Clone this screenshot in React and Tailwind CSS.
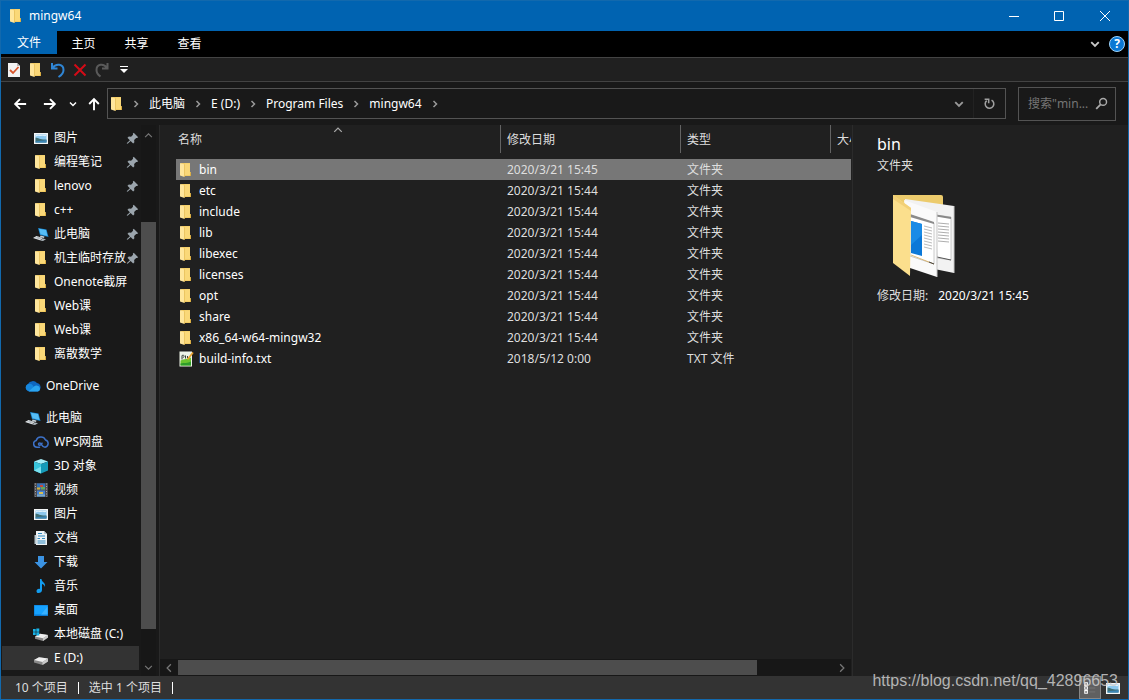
import { useState } from 'react';

const FONT = "font-['Noto_Sans','Noto_Sans_CJK_SC',sans-serif]";

const quickAccess = [
  { name: '图片', icon: PictureIcon, pinned: true },
  { name: '编程笔记', icon: FolderIcon, pinned: true },
  { name: 'lenovo', icon: FolderIcon, pinned: true },
  { name: 'c++', icon: FolderIcon, pinned: true },
  { name: '此电脑', icon: ComputerIcon, pinned: true },
  { name: '机主临时存放', icon: FolderIcon, pinned: true },
  { name: 'Onenote截屏', icon: FolderIcon },
  { name: 'Web课', icon: FolderIcon },
  { name: 'Web课', icon: FolderIcon },
  { name: '离散数学', icon: FolderIcon },
];

const computer = [
  { name: 'WPS网盘', icon: WpsIcon },
  { name: '3D 对象', icon: CubeIcon },
  { name: '视频', icon: VideoIcon },
  { name: '图片', icon: PictureIcon },
  { name: '文档', icon: DocumentIcon },
  { name: '下载', icon: DownloadIcon },
  { name: '音乐', icon: MusicIcon },
  { name: '桌面', icon: DesktopIcon },
  { name: '本地磁盘 (C:)', icon: SystemDriveIcon },
  { name: 'E (D:)', icon: DriveIcon, active: true },
];

const files = [
  { name: 'bin', date: '2020/3/21 15:45', type: '文件夹' },
  { name: 'etc', date: '2020/3/21 15:44', type: '文件夹' },
  { name: 'include', date: '2020/3/21 15:44', type: '文件夹' },
  { name: 'lib', date: '2020/3/21 15:44', type: '文件夹' },
  { name: 'libexec', date: '2020/3/21 15:44', type: '文件夹' },
  { name: 'licenses', date: '2020/3/21 15:44', type: '文件夹' },
  { name: 'opt', date: '2020/3/21 15:44', type: '文件夹' },
  { name: 'share', date: '2020/3/21 15:44', type: '文件夹' },
  { name: 'x86_64-w64-mingw32', date: '2020/3/21 15:44', type: '文件夹' },
  { name: 'build-info.txt', date: '2018/5/12 0:00', type: 'TXT 文件' },
];

function Svg({ children, size = 16, className = '' }) {
  return (
    <svg width={size} height={size} viewBox="0 0 16 16" fill="none" aria-hidden="true" className={`shrink-0 ${className}`}>
      {children}
    </svg>
  );
}

function FolderIcon() {
  return (
    <Svg>
      <path d="M3 1h9v9l1 .5V14H6z" fill="#f3cc64" />
      <path d="M7 1.500h5v9l.5 2.500H7z" fill="#fad878" />
      <path d="M2 1 6.500 2.500V15L2 13.500z" fill="#ffe69c" />
      <path d="M6.500 2.500V15" stroke="#e0b74d" strokeWidth=".6" />
      <path d="M12 10.500h1V14h-1z" fill="#dcae42" />
    </Svg>
  );
}

function PictureIcon() {
  return (
    <Svg>
      <path d="M1 3h14v11H1z" fill="#f4f6f7" />
      <path d="M2.500 4.500h11v8h-11z" fill="#8cc8ee" />
      <path d="M3 6.500c2-1.500 4 0 5.500-.5s3 .5 4.500 0v-1H3z" fill="#dff1fb" />
      <path d="M2.500 7.500c3 .3 5 2.500 11 2v3h-11z" fill="#3f6f75" />
      <path d="M2.500 11.500c4-.8 7-.6 11-1.500v2.500h-11z" fill="#3b86b8" />
    </Svg>
  );
}

function ComputerIcon() {
  return (
    <Svg>
      <path d="m5 2 8.500 1.500 2 7.500L7 9z" fill="#1684cf" />
      <path d="m6 2.800 7 1.300 1.500 5.900L7.500 8.300z" fill="#56bdf5" />
      <path d="m7.500 9.500 4 1-.5 1.500-4-1z" fill="#c5d0d6" />
      <path d="m0 12 3.500-2 6.500 2-3 2.300z" fill="#e7eaec" />
      <path d="m7 14.500 3-2 3 .8-3 1.700z" fill="#a9b2b8" />
      <path d="m2.500 11.500 5 1.600M4 10.900l4.500 1.500" stroke="#8c969c" strokeWidth=".6" />
    </Svg>
  );
}

function CloudIcon() {
  return (
    <Svg>
      <path d="M4 13.500A4 4 0 0 1 3 6a5.500 5.500 0 0 1 9-1 4.500 4.500 0 0 1 1 8.500z" fill="#0f67c0" />
      <path d="M3.500 6a4 4 0 0 1 4 1l4 6H3.500A3.600 3.600 0 0 1 3.500 6z" fill="#1687dd" />
      <path d="M3.500 13.500 9 8.500a4 4 0 0 1 3.500-.8 3 3 0 0 1 .5 5.800z" fill="#2ba5f0" />
    </Svg>
  );
}

function WpsIcon() {
  return (
    <Svg>
      <path d="M6.500 13.200H4a3.400 3.400 0 0 1-.8-6.700A5 5 0 0 1 12.500 6a3.700 3.700 0 0 1-.5 7.200c-3.500 0-3-4.200-5.300-4.200-1.600 0-1.600 2.200 0 2.200 1.300 0 1.800-1.200 2.300-2" stroke="#3d71c7" strokeWidth="1.500" strokeLinecap="round" />
    </Svg>
  );
}

function CubeIcon() {
  return (
    <Svg>
      <path d="m1 3.500 7-2.500 7 2.500L8 6z" fill="#a5edf8" />
      <path d="M1 3.500 8 6v9.500l-7-3z" fill="#38c5dc" />
      <path d="M15 3.500 8 6v9.500l7-3z" fill="#159ab8" />
      <path d="m1 12.500 7-4v7z" fill="#78e0ef" />
    </Svg>
  );
}

function VideoIcon() {
  return (
    <Svg>
      <path d="M1 1h14v14H1z" fill="#4c4c50" />
      <path d="M2.500 1.500v13M13.500 1.500v13" stroke="#a8a8aa" strokeWidth="1" strokeDasharray="1 1.500" />
      <path d="M4 1.500h8v6H4z" fill="#3272bb" />
      <path d="M4 8.500h8v6H4z" fill="#437fd0" />
      <path d="M4 5.500h3v2H4z" fill="#d5ae36" />
      <path d="M7 3h3v2H7z" fill="#c94934" />
      <path d="M8 5h4v2.500H8z" fill="#64a559" />
      <path d="M4 12.500h8v2H4z" fill="#7ba8c7" />
      <path d="M6 10h4v2H6z" fill="#d9c054" />
    </Svg>
  );
}

function DocumentIcon() {
  return (
    <Svg>
      <path d="M3 1h8l3 3v11H3z" fill="#eef2f4" />
      <path d="M11 1v3h3" fill="#b4c4cd" />
      <path d="M1.500 5h2v9h-2z" fill="#b8c8d0" />
      <path d="M5 3.500h4M5 6h7M4.500 8.500H7M9 8.500h3M4.500 11h8M4.500 13h8" stroke="#318ac1" />
    </Svg>
  );
}

function DownloadIcon() {
  return (
    <Svg>
      <path d="M5 2h6v6h3.500L8 14.500 1.500 8H5z" fill="#3b93e3" />
    </Svg>
  );
}

function MusicIcon() {
  return (
    <Svg>
      <path d="M7 1h1.500c0 3 4.500 3.500 3.500 8-.8-2.500-2-2.800-3-3v6c0 1.800-1.500 3-3.500 3-1.500 0-2-1-2-1.800C3.500 11.500 5 10.500 7 11z" fill="#129df0" />
    </Svg>
  );
}

function DesktopIcon() {
  return (
    <Svg>
      <path d="M1 3h14v11H1z" fill="#0b78d0" />
      <path d="M1.500 3.500h13v9h-13z" fill="#16a2ff" />
      <path d="m8 12.500 6.500-8v8z" fill="#38b1ff" />
    </Svg>
  );
}

function DriveIcon() {
  return (
    <Svg>
      <path d="m1 10 5-2.800 9 1.300v3L9.500 15 1 12.500z" fill="#898989" />
      <path d="m1 10 5-2.800 9 1.300L9.500 12z" fill="#efefef" />
      <path d="m9.500 12 5.500-3.500v3L9.500 15z" fill="#c9c9c9" />
    </Svg>
  );
}

function SystemDriveIcon() {
  return (
    <Svg>
      <path d="m2 10.500 5-2.800 8 1.300v2.500L10 15l-8-2.300z" fill="#898989" />
      <path d="m2 10.500 5-2.800 8 1.300-5 3.300z" fill="#efefef" />
      <path d="m10 12.300 5-3.300v2.500L10 15z" fill="#c9c9c9" />
      <path d="M0 3h2.700v2.700H0zM3.300 2.600h3v3.100h-3zM0 6.300h2.700V9H0zM3.300 6.300h3v3.100h-3z" fill="#18b3e8" />
    </Svg>
  );
}

function TextFileIcon() {
  return (
    <Svg>
      <path d="M1.500.5H14V15.500H1.500z" fill="#eef4e8" />
      <path d="M2.500 9.500c4-2 7-1 10.500-3v8H2.500z" fill="#6cc52f" />
      <path d="M2.500 12.500c4-1 7 0 10.500-2v4H2.500z" fill="#2e9d2a" />
      <path d="M4 8.500v-4c2.500-1 3 1.500.8 2M7.500 4.500v3M9.500 5v2" stroke="#39433a" />
      <path d="m9.500 8.500 5.500-7" stroke="#e9a12c" strokeWidth="1.700" />
    </Svg>
  );
}

function PinIcon() {
  return (
    <Svg size={13} className="ml-auto">
      <path d="m9.500 1 5.500 5.500-1.500 1-1-.2L10 9.800l.3 2.700-1.500 1.500L5.700 11 2 14.500l-1.200-.7L4.800 10 1.800 7l1.700-1.500 2.700.3 2.500-2.300-.3-1.300z" fill="#9ba5ad" />
    </Svg>
  );
}

function Chevron({ dir, size = 10, width = 2, className = '' }) {
  const paths = {
    up: 'M2 11l6-6 6 6',
    down: 'M2 5l6 6 6-6',
    left: 'M11 2 5 8l6 6',
    right: 'M5 2l6 6-6 6',
  };
  return (
    <Svg size={size} className={className}>
      <path d={paths[dir]} stroke="currentColor" strokeWidth={width} />
    </Svg>
  );
}

function ArrowIcon({ dir }) {
  const paths = {
    left: 'M15 8H3M8 2.500 2.500 8 8 13.500',
    right: 'M1 8h12M8 2.500 13.500 8 8 13.500',
    up: 'M8 15V3M2.500 8 8 2.500 13.500 8',
  };
  return (
    <Svg size={14}>
      <path d={paths[dir]} stroke="#fff" strokeWidth="2.200" />
    </Svg>
  );
}

function LargeFolder() {
  return (
    <svg width="62" height="84" viewBox="0 0 62 84" aria-hidden="true" className="ml-4">
      <path d="M0 1h48a2 2 0 0 1 2 2v70H8z" fill="#eccb6c" />
      <path d="m12 5 49 7v67l-44-9z" fill="#f2f2f2" />
      <path d="M61 12v67" stroke="#c9c9c9" />
      <path d="m42 21 16 2v43l-14-2z" fill="#fff" stroke="#b4b4b4" strokeWidth=".7" />
      <path d="m40 20 18 3v2l-18-3z" fill="#888" />
      <path d="M45 29l11 1M45 32l11 1M45 35l11 1M45 38l11 1M45 41l11 1M45 44l11 1M45 47l11 1" stroke="#999" strokeWidth=".8" />
      <path d="m44 63 14 3" stroke="#555" />
      <path d="m11 6 33 12v65l-27-9z" fill="#fafafa" />
      <path d="M44 18v65" stroke="#c5c5c5" />
      <path d="m17 21 24 8v41l-24-8z" fill="#fff" stroke="#b4b4b4" strokeWidth=".7" />
      <path d="m17 20 24 8v2l-24-7z" fill="#8b8b8b" />
      <path d="m18 27 11 3v32l-11-3z" fill="#0b78d8" />
      <path d="m18 27 11 3v11l-11 10z" fill="#198be6" />
      <path d="m31 32 8 2M31 35l8 2M31 38l8 2M31 41l8 2M31 44l8 2M31 47l8 2M31 50l8 2M31 53l8 2" stroke="#aaa" strokeWidth=".8" />
      <path d="m18 61 23 9" stroke="#d5a956" strokeWidth=".8" />
      <path d="m36 68 5 2" stroke="#444" />
      <path d="M0 1 18 14l-1 68L0 69z" fill="#fbdf8d" />
      <path d="m0 1 18 13v3L0 5z" fill="#f2d077" />
    </svg>
  );
}

function NavItem({ item, root = false }) {
  const Icon = item.icon;
  return (
    <li>
      <a
        href="#"
        className={`flex h-6 items-center whitespace-nowrap ${root ? 'pl-[23px]' : 'pl-[31px]'} ${item.active ? 'bg-[#333333]' : ''}`}
      >
        <Icon />
        <span className="ml-[5px]">{item.name}</span>
        {item.pinned && <PinIcon />}
      </a>
    </li>
  );
}

function TitleBar() {
  return (
    <header className="flex h-[30px] items-center bg-[#0063b1] pl-[7px]">
      <FolderIcon />
      <h1 className="ml-[5px] text-xs">mingw64</h1>
      <div className="ml-auto flex h-full">
        <button aria-label="最小化" className="flex w-[45px] items-center justify-center">
          <svg width="10" height="10" stroke="#fff"><path d="M0 5.500h10" /></svg>
        </button>
        <button aria-label="最大化" className="flex w-[45px] items-center justify-center">
          <svg width="10" height="10" stroke="#fff" fill="none"><path d="M.5.5h9v9h-9z" /></svg>
        </button>
        <button aria-label="关闭" className="flex w-[47px] items-center justify-center">
          <svg width="10" height="10" stroke="#fff"><path d="m0 0 10 10M10 0 0 10" /></svg>
        </button>
      </div>
    </header>
  );
}

function Ribbon() {
  return (
    <nav className="flex h-[26px] items-start bg-black">
      <button className="h-[23px] w-14 bg-[#0063b1]">文件</button>
      {['主页', '共享', '查看'].map(tab => (
        <button key={tab} className="h-[26px] w-[53px]">{tab}</button>
      ))}
      <div className="ml-auto flex h-[26px] items-center gap-[9px] pr-[3px]">
        <button aria-label="展开功能区" className="text-[#c8c8c8]"><Chevron dir="down" width={3} /></button>
        <button aria-label="帮助" className="flex size-4 items-center justify-center rounded-full border border-[#9fd4fb] bg-[#0b78d4] text-xs font-bold">?</button>
      </div>
    </nav>
  );
}

function QuickToolbar() {
  return (
    <div className="flex h-[25px] items-center gap-1.5 border-y border-[#434343] bg-[#202020] pl-[5px]">
      <button aria-label="属性">
        <Svg>
          <path d="M2 1h9l3 3v11H2z" fill="#f2f2f2" />
          <path d="M11 1v3h3" fill="#b7b7b7" />
          <path d="m4 8 3 3 5.500-6" stroke="#d9552b" strokeWidth="1.800" />
        </Svg>
      </button>
      <button aria-label="新建文件夹"><FolderIcon /></button>
      <button aria-label="撤消">
        <Svg>
          <path d="M2 1v5.500h5.500M2.500 6C6 .8 13.500 2 13.500 8c0 4-2.500 5.500-5 7" stroke="#2f86d6" strokeWidth="2" />
        </Svg>
      </button>
      <button aria-label="删除">
        <Svg>
          <path d="m2.500 2.500 11 11M13.500 2.500l-11 11" stroke="#d40b17" strokeWidth="2" />
        </Svg>
      </button>
      <button aria-label="恢复">
        <Svg>
          <path d="M13.500 1v5.500H8M13 6C9.500.8 2.500 2 2.500 8c0 4 2.500 5.500 4 6.500" stroke="#5a5a5a" strokeWidth="2" />
        </Svg>
      </button>
      <button aria-label="自定义快速访问工具栏" className="ml-1">
        <svg width="8" height="8"><path d="M0 .5h8" stroke="#fff" /><path d="M0 3h8L4 7z" fill="#fff" /></svg>
      </button>
    </div>
  );
}

function AddressRow() {
  const [query, setQuery] = useState('搜索"min...');
  return (
    <div className="flex h-[43px] items-center bg-[#191919] px-3">
      <div className="flex w-[94px] items-center">
        <button aria-label="后退"><ArrowIcon dir="left" /></button>
        <button aria-label="前进" className="ml-4"><ArrowIcon dir="right" /></button>
        <button aria-label="最近位置" className="ml-3"><Chevron dir="down" size={8} width={3} /></button>
        <button aria-label="上移" className="ml-2.5"><ArrowIcon dir="up" /></button>
      </div>
      <div className="flex h-[31px] flex-1 items-center border border-[#535353] pl-px">
        <FolderIcon />
        {['此电脑', 'E (D:)', 'Program Files', 'mingw64'].map(part => (
          <span key={part} className="flex items-center">
            <Chevron dir="right" size={8} width={3} className="mx-[7px] text-[#999]" />
            <a href="#" className="px-[2px]">{part}</a>
          </span>
        ))}
        <Chevron dir="right" size={8} width={3} className="ml-[7px] text-[#999]" />
        <button aria-label="以前的位置" className="ml-auto flex w-7 justify-center text-[#999]">
          <Chevron dir="down" width={3} />
        </button>
        <button aria-label="刷新" className="flex h-full w-8 items-center justify-center border-l border-[#222]">
          <Svg size={13}>
            <path d="M10.500 3.800A5.300 5.300 0 1 1 4.500 4.500M2 2.800h5v5" stroke="#a0a0a0" strokeWidth="1.900" />
          </Svg>
        </button>
      </div>
      <label className="ml-3 flex h-[34px] w-[98px] items-center border border-[#535353] pr-[7px] pl-[9px]">
        <input
          aria-label="搜索"
          value={query}
          onChange={e => setQuery(e.target.value)}
          className="w-full min-w-0 flex-1 bg-transparent text-[#757575] outline-none"
        />
        <Svg size={13} className="ml-[3px]">
          <path d="m1.500 14.500 5.500-5.500" stroke="#aaa" strokeWidth="2.200" />
          <circle cx="10" cy="6" r="4.200" stroke="#aaa" strokeWidth="1.800" />
        </Svg>
      </label>
    </div>
  );
}

function Sidebar() {
  return (
    <aside className="flex w-[159px] shrink-0 border-r border-[#2b2b2b] bg-[#191919]">
      <div className="min-w-0 flex-1 pt-px pl-px">
        <ul>
          {quickAccess.map((item, i) => <NavItem key={i} item={item} />)}
        </ul>
        <ul className="mt-2">
          <NavItem item={{ name: 'OneDrive', icon: CloudIcon }} root />
        </ul>
        <ul className="mt-2">
          <NavItem item={{ name: '此电脑', icon: ComputerIcon }} root />
          {computer.map(item => <NavItem key={item.name} item={item} />)}
        </ul>
      </div>
      <div className="mr-[3px] ml-0.5 flex w-[15px] flex-col items-center bg-[#171717] text-[#777]">
        <Chevron dir="up" size={9} className="mt-1.5 mb-1.5" />
        <div className="grow-76" />
        <div className="w-full grow-407 bg-[#4d4d4d]" />
        <div className="grow-34" />
        <Chevron dir="down" size={9} className="mb-1" />
      </div>
    </aside>
  );
}

function FileList({ selected, onSelect }) {
  return (
    <main className="flex min-w-0 flex-1 flex-col bg-[#202020] pr-px">
      <div className="flex-1 overflow-hidden pl-4">
        <table className="w-full table-fixed border-collapse">
          <colgroup>
            <col className="w-[325px]" />
            <col className="w-[180px]" />
            <col className="w-[150px]" />
            <col />
          </colgroup>
          <thead>
            <tr>
              {['名称', '修改日期', '类型', '大小'].map((h, i) => (
                <th key={h} className="h-[34px] overflow-hidden p-0 text-left align-top font-normal text-[#dedede]">
                  <div className={`relative flex h-7 items-center pt-0.5 whitespace-nowrap ${i === 0 ? 'pl-0.5' : 'pl-1.5'} ${i < 3 ? 'border-r border-[#636363]' : ''}`}>
                    {h}
                    {i === 0 && <Chevron dir="up" size={10} width={2} className="absolute top-0 left-1/2 -translate-x-1/2 text-[#aaa]" />}
                  </div>
                </th>
              ))}
            </tr>
          </thead>
          <tbody>
            {files.map(f => (
              <tr
                key={f.name}
                onClick={() => onSelect(f)}
                className={`h-[21px] ${selected.name === f.name ? 'bg-[#777777]' : ''}`}
              >
                <td className="p-0 pl-0.5">
                  <div className="flex items-center gap-[5px] text-white">
                    {f.name.endsWith('.txt') ? <TextFileIcon /> : <FolderIcon />}
                    {f.name}
                  </div>
                </td>
                <td className="p-0 pl-1.5 text-[#dedede]">{f.date}</td>
                <td className="p-0 pl-1.5 text-[#dedede]">{f.type}</td>
                <td className="p-0" />
              </tr>
            ))}
          </tbody>
        </table>
      </div>
      <div className="flex h-[17px] items-center bg-[#171717] px-1 text-[#777]">
        <Chevron dir="left" size={10} />
        <div className="ml-1 h-[15px] grow-580 bg-[#4d4d4d]" />
        <div className="grow-80" />
        <Chevron dir="right" size={10} />
      </div>
    </main>
  );
}

function PreviewPane({ file }) {
  return (
    <section className="w-[276px] shrink-0 border-l border-[#2b2b2b] bg-[#202020] pt-[7px] pl-6">
      <h2 className="text-base">{file.name}</h2>
      <p className="mt-0.5 leading-4 text-[#dedede]">{file.type}</p>
      <div className="mt-5"><LargeFolder /></div>
      <dl className="mt-2.5 flex gap-2.5">
        <dt className="text-[#dedede]">修改日期:</dt>
        <dd>{file.date}</dd>
      </dl>
    </section>
  );
}

function StatusBar() {
  return (
    <footer className="flex h-[23px] items-center bg-[#333333] pl-3.5 text-[#dedede]">
      <span>10 个项目</span>
      <span className="ml-2.5 h-3 w-px bg-white" />
      <span className="ml-2.5">选中 1 个项目</span>
      <span className="ml-2.5 h-3 w-px bg-white" />
      <div className="ml-auto flex h-full items-center pr-[7px]">
        <button aria-label="详细信息" className="flex h-full w-[22px] items-center justify-center border border-[#888] bg-[#606060]">
          <Svg size={14}>
            <path d="M2 2h3v3H2zM2 6.500h3v3H2zM2 11h3v3H2z" stroke="#fff" strokeWidth="1.200" />
            <path d="M7 3.500h7M7 8h7M7 12.500h7" stroke="#777" />
          </Svg>
        </button>
        <button aria-label="大缩略图" className="ml-1"><PictureIcon /></button>
      </div>
    </footer>
  );
}

export default function App() {
  const [selected, setSelected] = useState(files[0]);

  return (
    <div className={`relative flex min-h-screen flex-col border border-[#1269ad] bg-[#191919] text-xs text-white ${FONT}`}>
      <TitleBar />
      <Ribbon />
      <QuickToolbar />
      <AddressRow />
      <div className="flex flex-1">
        <Sidebar />
        <FileList selected={selected} onSelect={setSelected} />
        <PreviewPane file={selected} />
      </div>
      <StatusBar />
      <p className="pointer-events-none absolute right-2.5 bottom-1.5 font-['Liberation_Sans',Arial,sans-serif] text-base text-[#cccccc]/85">
        https://blog.csdn.net/qq_42896653
      </p>
    </div>
  );
}
